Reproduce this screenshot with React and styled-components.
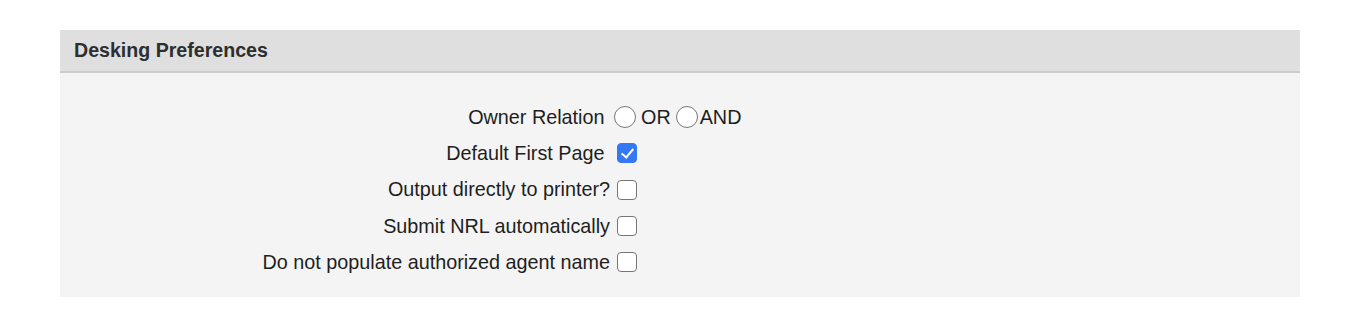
import styled, { createGlobalStyle } from 'styled-components';
import { useState } from 'react';

const GlobalStyle = createGlobalStyle`
  body {
    margin: 0;
    background: #ffffff;
    font-family: "Liberation Sans", Arial, sans-serif;
  }
`;

export default function App() {
  const [relation, setRelation] = useState('');
  const [prefs, setPrefs] = useState({
    firstPage: true,
    printer: false,
    nrl: false,
    agent: false,
  });

  const toggle = (key) => setPrefs({ ...prefs, [key]: !prefs[key] });

  return (
    <Page>
      <GlobalStyle />
      <Panel>
        <Header>Desking Preferences</Header>
        <Body>
          <Form>
            <Label>Owner Relation&nbsp;</Label>
            <Field>
              <Radio
                type="radio"
                name="relation"
                checked={relation === 'OR'}
                onChange={() => setRelation('OR')}
              />
              <Option>OR</Option>
              <Radio
                type="radio"
                name="relation"
                checked={relation === 'AND'}
                onChange={() => setRelation('AND')}
                $tight
              />
              <Option>AND</Option>
            </Field>

            <Label>Default First Page&nbsp;</Label>
            <Field>
              <Check
                type="checkbox"
                checked={prefs.firstPage}
                onChange={() => toggle('firstPage')}
              />
            </Field>

            <Label>Output directly to printer?</Label>
            <Field>
              <Check
                type="checkbox"
                checked={prefs.printer}
                onChange={() => toggle('printer')}
              />
            </Field>

            <Label>Submit NRL automatically</Label>
            <Field>
              <Check
                type="checkbox"
                checked={prefs.nrl}
                onChange={() => toggle('nrl')}
              />
            </Field>

            <Label>Do not populate authorized agent name</Label>
            <Field>
              <Check
                type="checkbox"
                checked={prefs.agent}
                onChange={() => toggle('agent')}
              />
            </Field>
          </Form>
        </Body>
      </Panel>
    </Page>
  );
}

const Page = styled.div`
  padding: 30px 60px 28px;
`;
const Panel = styled.section`
  background: #f4f4f4;
`;
const Header = styled.h2`
  margin: 0;
  height: 41px;
  line-height: 41px;
  padding-left: 14px;
  background: #dfdfdf;
  border-bottom: 2px solid #cccccc;
  font-size: 19.6px;
  font-weight: 700;
  color: #2e2e2e;
`;
const Body = styled.div`
  padding: 26px 0 17px;
`;
const Form = styled.div`
  display: grid;
  grid-template-columns: 550px 1fr;
  grid-auto-rows: 36.3px;
  align-items: center;
  column-gap: 4px;
`;
const Label = styled.label`
  text-align: right;
  font-size: 19.8px;
  color: #1e1e1e;
  white-space: nowrap;
`;
const Field = styled.div`
  display: flex;
  align-items: center;
  font-size: 19.8px;
  color: #1e1e1e;
`;
const Option = styled.span`
  margin-right: 5px;
`;
const Radio = styled.input`
  appearance: none;
  width: 22px;
  height: 22px;
  margin: 0 ${(p) => (p.$tight ? '2px' : '5px')} 0 0;
  border: 1.5px solid #767676;
  border-radius: 50%;
  background: #ffffff;
  box-sizing: border-box;
  cursor: pointer;
  &:checked {
    border: 6px solid #3478f6;
  }
`;
const Check = styled.input`
  appearance: none;
  position: relative;
  width: 20px;
  height: 20px;
  margin: 0 0 0 3px;
  border: 1.5px solid #767676;
  border-radius: 4px;
  background: #ffffff;
  box-sizing: border-box;
  cursor: pointer;
  &:checked {
    background: #3478f6;
    border-color: #3478f6;
  }
  &:checked::after {
    content: '';
    position: absolute;
    left: 5.5px;
    top: 1.5px;
    width: 5px;
    height: 10px;
    border: solid #ffffff;
    border-width: 0 2.5px 2.5px 0;
    transform: rotate(40deg);
  }
`;
